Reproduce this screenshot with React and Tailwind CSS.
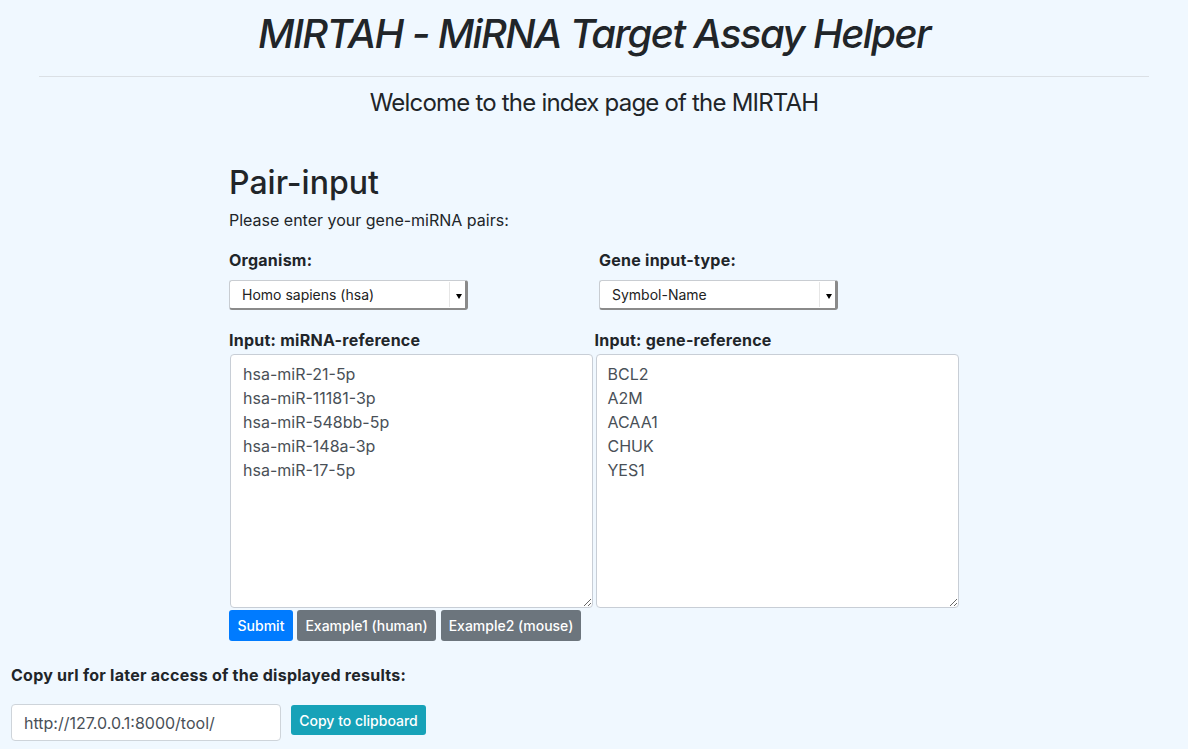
import React from "react";

function FakeSelect({ value }) {
  return (
    <div className="relative flex h-[30px] w-[239px] items-center rounded-[3px] border border-[#c9cdd2] border-r-[#8a8a8a] border-b-[#8a8a8a] border-r-[3px] border-b-[2px] bg-white">
      <span className="pl-[12px] text-[14px] text-[#222]">{value}</span>
      <div className="absolute right-[3px] top-[13px] h-0 w-0 border-l-[3.5px] border-r-[3.5px] border-t-[5px] border-l-transparent border-r-transparent border-t-black" />
      <div className="absolute right-[15px] top-[1px] bottom-[1px] w-px bg-[#e6e6e6]" />
    </div>
  );
}

export default function App() {
  const font = { fontFamily: "Inter, 'Liberation Sans', Arial, sans-serif" };
  return (
    <div className="min-h-[749px] w-full bg-[#f0f8ff] text-[#212529]" style={font}>
      <div className="mx-auto w-[1110px]">
        <h1 className="pt-[10px] text-center text-[40px] font-medium italic leading-[48px] tracking-[-1.6px]">
          MIRTAH - MiRNA Target Assay Helper
        </h1>
        <hr className="mt-[18px] border-t border-[#dbe0e5]" />
        <h4 className="mt-[11px] text-center text-[24px] leading-[29px] tracking-[-0.8px]">
          Welcome to the index page of the MIRTAH
        </h4>
      </div>

      <div className="mx-auto mt-[47px] w-[730px]">
        <h2 className="text-[32px] leading-[38px] font-medium">Pair-input</h2>
        <p className="mt-[6px] text-[16px] leading-[24px]">Please enter your gene-miRNA pairs:</p>

        <div className="mt-[16px] grid grid-cols-2 gap-x-[6px]">
          <div>
            <div className="text-[16px] font-bold leading-[24px] tracking-[0.25px]">Organism:</div>
            <div className="mt-[8px]">
              <FakeSelect value="Homo sapiens (hsa)" />
            </div>
          </div>
          <div className="pl-[2px]">
            <div className="text-[16px] font-bold leading-[24px] tracking-[0.25px]">Gene input-type:</div>
            <div className="mt-[8px]">
              <FakeSelect value="Symbol-Name" />
            </div>
          </div>
        </div>

        <div className="mt-[18px] grid grid-cols-2 gap-x-[3px]">
          <div>
            <div className="text-[16px] font-bold leading-[24px] tracking-[0.25px]">Input: miRNA-reference</div>
            <textarea
              className="mt-[2px] ml-[1px] block h-[254px] w-[363px] rounded-[4px] border border-[#c8ced6] bg-white px-[12px] py-[7px] text-[16px] leading-[24px] text-[#495057] outline-none"
              style={font}
              defaultValue={"hsa-miR-21-5p\nhsa-miR-11181-3p\nhsa-miR-548bb-5p\nhsa-miR-148a-3p\nhsa-miR-17-5p"}
            />
          </div>
          <div>
            <div className="-ml-[1px] text-[16px] font-bold leading-[24px] tracking-[0.25px]">Input: gene-reference</div>
            <textarea
              className="mt-[2px] block h-[254px] w-[363px] rounded-[4px] border border-[#c8ced6] bg-white px-[11px] py-[7px] text-[16px] leading-[24px] text-[#495057] outline-none"
              style={font}
              defaultValue={"BCL2\nA2M\nACAA1\nCHUK\nYES1"}
            />
          </div>
        </div>

        <div className="mt-[2px] flex gap-[4px]">
          <button className="h-[31px] w-[64px] rounded-[3px] bg-[#007bff] text-[14px] font-medium text-white">Submit</button>
          <button className="h-[31px] w-[139px] rounded-[3px] bg-[#6c757d] text-[14px] font-medium text-white">Example1 (human)</button>
          <button className="ml-[1px] h-[31px] w-[140px] rounded-[3px] bg-[#6c757d] text-[14px] font-medium text-white">Example2 (mouse)</button>
        </div>
      </div>

      <div className="px-[11px] pt-[22px]">
        <div className="text-[16px] font-bold leading-[24px] tracking-[0.25px]">Copy url for later access of the displayed results:</div>
        <div className="mt-[17px] flex items-start gap-[10px]">
          <div className="flex h-[37px] w-[270px] items-center rounded-[4px] border border-[#ced4da] bg-white px-[12px] text-[16px] text-[#495057]">
            http://127.0.0.1:8000/tool/
          </div>
          <button className="mt-[1px] h-[30px] w-[135px] rounded-[3px] bg-[#17a2b8] text-[14px] font-medium text-white">Copy to clipboard</button>
        </div>
      </div>
    </div>
  );
}
